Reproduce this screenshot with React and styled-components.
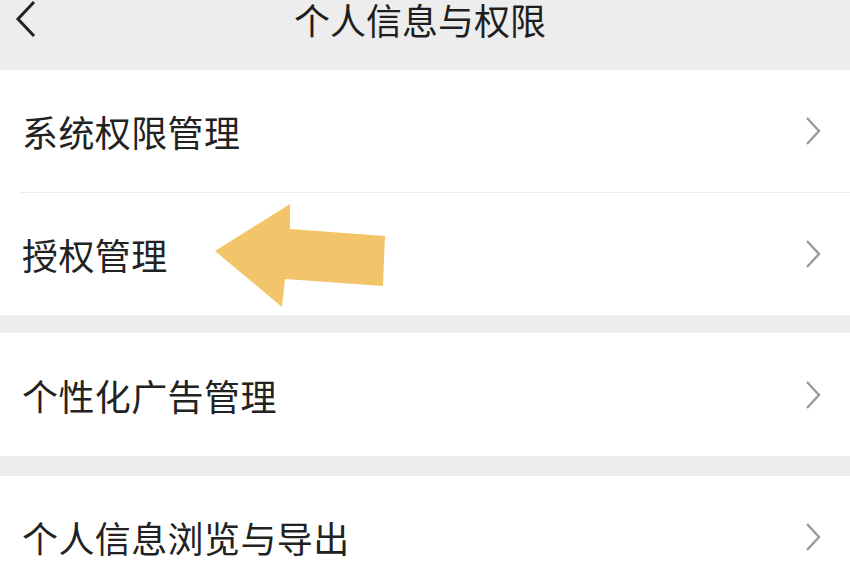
import React from "react";
import styled, { createGlobalStyle } from "styled-components";

const GlobalStyle = createGlobalStyle`
  html, body {
    margin: 0;
    padding: 0;
    background: #ededed;
    overflow: hidden;
  }
  body {
    font-family: "Noto Sans CJK SC", "Noto Sans", sans-serif;
    color: #222;
  }
`;

const Page = styled.div`
  width: 850px;
  height: 565px;
  background: #ededed;
  overflow: hidden;
`;

const Header = styled.header`
  position: relative;
  height: 70px;
  display: flex;
  justify-content: center;
  align-items: flex-start;
`;

const Title = styled.h1`
  margin: 1px 0 0 -10px;
  font-size: 36px;
  font-weight: 400;
  line-height: 36px;
  color: #1e1e1e;
`;

const Back = styled.svg`
  position: absolute;
  left: 14px;
  top: 0;
`;

const Group = styled.section`
  background: #fff;
  margin-bottom: ${(p) => p.$gap || 0}px;
`;

const Row = styled.div`
  position: relative;
  height: ${(p) => p.$h || 122}px;
  display: flex;
  align-items: center;
  justify-content: space-between;
  padding: 0 28px 0 22px;
  box-sizing: border-box;
  border-top: ${(p) => (p.$divider ? "1px solid #ececec" : "none")};
  margin-left: ${(p) => (p.$divider ? 20 : 0)}px;
  padding-left: ${(p) => (p.$divider ? 2 : 22)}px;
`;

const Label = styled.span`
  font-size: 36px;
  line-height: 1;
  color: #222;
  letter-spacing: 0.4px;
`;

const Arrow = styled.svg`
  position: absolute;
  left: 170px;
  top: -5px;
`;

const Chevron = () => (
  <svg width="18" height="30" viewBox="0 0 18 30">
    <polyline
      points="3,2 15,15 3,28"
      fill="none"
      stroke="#9a9a9a"
      strokeWidth="2.4"
      strokeLinejoin="miter"
    />
  </svg>
);

const Item = ({ label, divider, h, children }) => (
  <Row $divider={divider} $h={h}>
    <Label>{label}</Label>
    <Chevron />
    {children}
  </Row>
);

export default function App() {
  return (
    <Page>
      <GlobalStyle />
      <Header>
        <Back width="26" height="40" viewBox="0 0 26 40">
          <polyline
            points="20,2 4,19 20,36"
            fill="none"
            stroke="#222"
            strokeWidth="3"
          />
        </Back>
        <Title>个人信息与权限</Title>
      </Header>
      <Group $gap={18}>
        <Item label="系统权限管理" />
        <Item label="授权管理" divider h={123}>
          <Arrow width="200" height="130" viewBox="0 0 200 130">
            <polygon
              points="25,63 100,16 100,41 195,48 193,98 95,91 92,119"
              fill="#f3c56a"
            />
          </Arrow>
        </Item>
      </Group>
      <Group $gap={20}>
        <Item label="个性化广告管理" h={123} />
      </Group>
      <Group>
        <Item label="个人信息浏览与导出" />
      </Group>
    </Page>
  );
}
